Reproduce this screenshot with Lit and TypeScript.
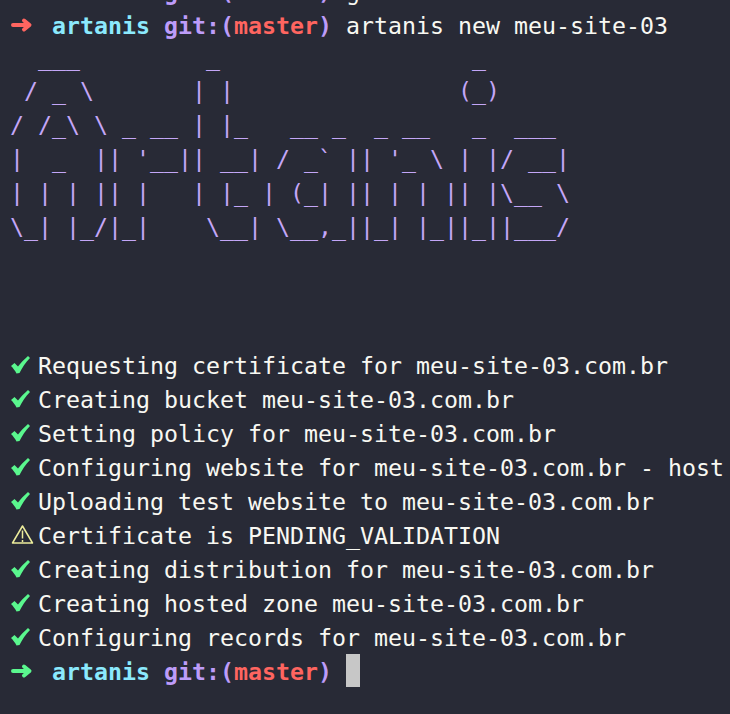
import { LitElement, html, css } from "lit";
import { customElement } from "lit/decorators.js";

const ART = [
  "  ___         _                  _",
  " / _ \\       | |                (_)",
  "/ /_\\ \\ _ __ | |_   __ _  _ __   _  ___",
  "|  _  || '__|| __| / _` || '_ \\ | |/ __|",
  "| | | || |   | |_ | (_| || | | || |\\__ \\",
  "\\_| |_/|_|    \\__| \\__,_||_| |_||_||___/",
];

const STEPS: [string, string][] = [
  ["ok", "Requesting certificate for meu-site-03.com.br"],
  ["ok", "Creating bucket meu-site-03.com.br"],
  ["ok", "Setting policy for meu-site-03.com.br"],
  ["ok", "Configuring website for meu-site-03.com.br - host"],
  ["ok", "Uploading test website to meu-site-03.com.br"],
  ["warn", "Certificate is PENDING_VALIDATION"],
  ["ok", "Creating distribution for meu-site-03.com.br"],
  ["ok", "Creating hosted zone meu-site-03.com.br"],
  ["ok", "Configuring records for meu-site-03.com.br"],
];

@customElement("app-root")
export class AppRoot extends LitElement {
  static styles = css`
    :host {
      display: block;
      width: 730px;
      height: 714px;
      overflow: hidden;
      background: #282a36;
    }
    .term {
      height: 714px;
      box-sizing: border-box;
      padding: 0 0 26px 10px;
      display: flex;
      flex-direction: column;
      justify-content: flex-end;
      font-family: "DejaVu Sans Mono", "Liberation Mono", monospace;
      font-size: 23.25px;
      color: #f8f8f2;
    }
    .line {
      flex: none;
      display: flex;
      align-items: center;
      box-sizing: border-box;
      height: 34px;
      white-space: pre;
    }
    .prompt { font-weight: bold; }
    .art { color: #c4a6f8; padding-bottom: 6px; }
    .cyan { color: #8be9fd; }
    .purple { color: #bd9cf9; }
    .red { color: #ff6560; }
    .arrow {
      display: block;
      flex: none;
      width: 24px;
      height: 18px;
      margin-right: 18px;
    }
    .mark {
      display: block;
      flex: none;
      width: 24px;
      height: 24px;
      margin-right: 4px;
    }
    .cursor {
      display: block;
      flex: none;
      align-self: flex-start;
      width: 14px;
      height: 33px;
      background: #c7c7c7;
    }
  `;

  private arrow(color: string) {
    return html`<svg class="arrow" viewBox="0 0 24 18">
      <path d="M3 9 H18.5 M14 4.5 L19.5 9 L14 13.5" fill="none" stroke=${color} stroke-width="4" stroke-linecap="round" stroke-linejoin="round"></path>
    </svg>`;
  }

  private prompt(color: string, branch: string) {
    return html`${this.arrow(color)}<span class="prompt cyan">artanis</span><span> </span><span class="prompt purple">git:(</span><span class="prompt red">${branch}</span><span class="prompt purple">)</span>`;
  }

  private mark(kind: string) {
    if (kind === "ok") {
      return html`<svg class="mark" viewBox="0 0 24 24">
        <path d="M1 13 L4.5 10 L8 13.5 C10.5 10 14 6.5 18 3 L20 5 C15.5 9.5 12 15 9.5 20 L6.5 20.5 C5 17.5 3 15 1 13 Z" fill="#5af78e"></path>
      </svg>`;
    }
    return html`<svg class="mark" viewBox="0 0 24 24">
      <path d="M12.5 3 L22.5 20 H2.5 Z" fill="none" stroke="#ecec9c" stroke-width="1.5" stroke-linejoin="round"></path>
      <path d="M12.5 7.5 V15.5 M12.5 17 V19" fill="none" stroke="#ecec9c" stroke-width="1.5"></path>
    </svg>`;
  }

  render() {
    return html`<div class="term">
      <div class="line">${this.prompt("#ff6560", "master")}<span> git status</span></div>
      <div class="line">${this.prompt("#ff6560", "master")}<span> artanis new meu-site-03</span></div>
      ${ART.map((l) => html`<div class="line art">${l}</div>`)}
      <div class="line"></div>
      <div class="line"></div>
      <div class="line"></div>
      ${STEPS.map(([k, t]) => html`<div class="line">${this.mark(k)}<span>${t}</span></div>`)}
      <div class="line">${this.prompt("#5af78e", "master")}<span> </span><span class="cursor"></span></div>
    </div>`;
  }
}
